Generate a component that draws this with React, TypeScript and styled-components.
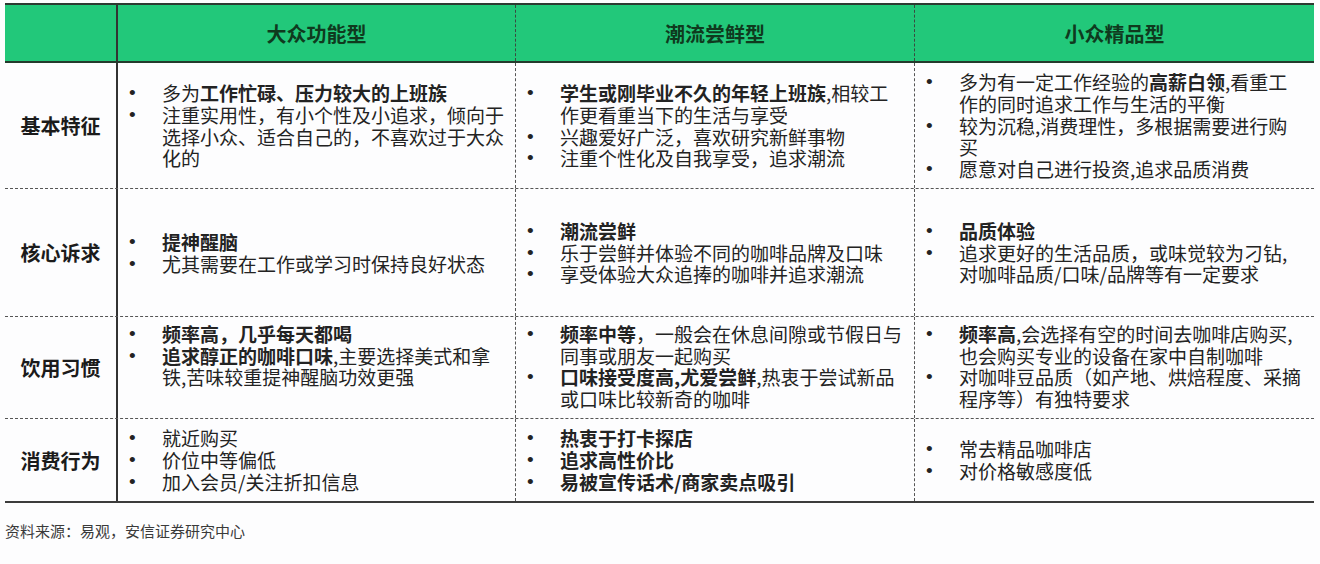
import styled, { createGlobalStyle } from 'styled-components';

const GlobalStyle = createGlobalStyle`
  body {
    margin: 0;
    background: #fdfdfe;
    font-family: "Noto Sans CJK SC", "Liberation Sans", sans-serif;
    color: #232323;
  }
`;

const Page = styled.div`
  padding: 3px 0 0 5px;
  width: 1309px;
`;

const Table = styled.div`
  border-top: 2px solid #2c3a31;
  border-bottom: 2px solid #3c3c3c;
`;

const Row = styled.div<{ $h: number; $head?: boolean }>`
  display: grid;
  grid-template-columns: 113px 398px 399px 399px;
  height: ${(p) => p.$h}px;
  box-sizing: border-box;
  background: ${(p) => (p.$head ? '#22c87a' : 'transparent')};
  border-bottom: ${(p) => (p.$head ? '2px solid #243a2c' : '1px dashed #555')};
  &:last-child {
    border-bottom: none;
  }
`;

const Label = styled.div`
  display: flex;
  align-items: center;
  justify-content: center;
  border-right: 2px solid #333;
  font-size: 20px;
  font-weight: 700;
  color: #1b1b1b;
`;

const HeadCell = styled.div`
  display: flex;
  align-items: center;
  justify-content: center;
  border-right: 1px dashed #3a4a40;
  font-size: 20px;
  font-weight: 700;
  color: #0f3a1e;
  &:last-child {
    border-right: none;
  }
`;

const Cell = styled.div<{ $top?: boolean }>`
  display: flex;
  flex-direction: column;
  justify-content: ${(p) => (p.$top ? 'flex-start' : 'center')};
  padding: ${(p) => (p.$top ? '6px 0 0 11px' : '0 0 0 11px')};
  border-right: 1px dashed #555;
  &:last-child {
    border-right: none;
  }
`;

const List = styled.ul`
  list-style: none;
  margin: 0;
  padding: 0;
`;

const Item = styled.li`
  display: grid;
  grid-template-columns: 33px 343px;
  font-size: 19px;
  line-height: 21.7px;
`;

const Dot = styled.span`
  font-family: "Liberation Sans", sans-serif;
  font-size: 19px;
`;

const Footer = styled.div`
  margin-top: 17px;
  font-size: 15px;
  color: #3a3a3a;
`;

type Part = string | { b: string };
type Col = { top?: boolean; items: Part[][] };

const rows: { label: string; h: number; cols: Col[] }[] = [
  {
    label: '基本特征',
    h: 126,
    cols: [
      {
        items: [
          ['多为', { b: '工作忙碌、压力较大的上班族' }],
          ['注重实用性，有小个性及小追求，倾向于选择小众、适合自己的，不喜欢过于大众化的'],
        ],
      },
      {
        items: [
          [{ b: '学生或刚毕业不久的年轻上班族' }, ',相较工作更看重当下的生活与享受'],
          ['兴趣爱好广泛，喜欢研究新鲜事物'],
          ['注重个性化及自我享受，追求潮流'],
        ],
      },
      {
        items: [
          ['多为有一定工作经验的', { b: '高薪白领' }, ',看重工作的同时追求工作与生活的平衡'],
          ['较为沉稳,消费理性，多根据需要进行购买'],
          ['愿意对自己进行投资,追求品质消费'],
        ],
      },
    ],
  },
  {
    label: '核心诉求',
    h: 128,
    cols: [
      { items: [[{ b: '提神醒脑' }], ['尤其需要在工作或学习时保持良好状态']] },
      {
        items: [
          [{ b: '潮流尝鲜' }],
          ['乐于尝鲜并体验不同的咖啡品牌及口味'],
          ['享受体验大众追捧的咖啡并追求潮流'],
        ],
      },
      {
        items: [
          [{ b: '品质体验' }],
          ['追求更好的生活品质，或味觉较为刁钻,对咖啡品质/口味/品牌等有一定要求'],
        ],
      },
    ],
  },
  {
    label: '饮用习惯',
    h: 102,
    cols: [
      {
        top: true,
        items: [
          [{ b: '频率高，几乎每天都喝' }],
          [{ b: '追求醇正的咖啡口味' }, ',主要选择美式和拿铁,苦味较重提神醒脑功效更强'],
        ],
      },
      {
        top: true,
        items: [
          [{ b: '频率中等' }, '，一般会在休息间隙或节假日与同事或朋友一起购买'],
          [{ b: '口味接受度高,尤爱尝鲜' }, ',热衷于尝试新品或口味比较新奇的咖啡'],
        ],
      },
      {
        top: true,
        items: [
          [{ b: '频率高' }, ',会选择有空的时间去咖啡店购买,也会购买专业的设备在家中自制咖啡'],
          ['对咖啡豆品质（如产地、烘焙程度、采摘程序等）有独特要求'],
        ],
      },
    ],
  },
  {
    label: '消费行为',
    h: 82,
    cols: [
      { items: [['就近购买'], ['价位中等偏低'], ['加入会员/关注折扣信息']] },
      {
        items: [
          [{ b: '热衷于打卡探店' }],
          [{ b: '追求高性价比' }],
          [{ b: '易被宣传话术/商家卖点吸引' }],
        ],
      },
      { items: [['常去精品咖啡店'], ['对价格敏感度低']] },
    ],
  },
];

const heads = ['大众功能型', '潮流尝鲜型', '小众精品型'];

const App = () => (
  <Page>
    <GlobalStyle />
    <Table>
      <Row $h={58} $head>
        <Label />
        {heads.map((h) => (
          <HeadCell key={h}>{h}</HeadCell>
        ))}
      </Row>
      {rows.map((r) => (
        <Row key={r.label} $h={r.h}>
          <Label>{r.label}</Label>
          {r.cols.map((c, ci) => (
            <Cell key={ci} $top={c.top}>
              <List>
                {c.items.map((parts, ii) => (
                  <Item key={ii}>
                    <Dot>•</Dot>
                    <span>
                      {parts.map((p, pi) =>
                        typeof p === 'string' ? p : <b key={pi}>{p.b}</b>,
                      )}
                    </span>
                  </Item>
                ))}
              </List>
            </Cell>
          ))}
        </Row>
      ))}
    </Table>
    <Footer>资料来源：易观，安信证券研究中心</Footer>
  </Page>
);

export default App;
